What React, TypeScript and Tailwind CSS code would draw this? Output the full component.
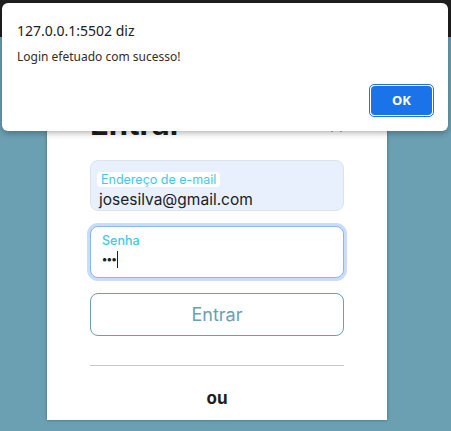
import React from "react";

export default function App() {
  return (
    <div className="relative h-[431px] w-[451px] overflow-hidden bg-[#6b9fb2]">
      <div className="h-[37px] bg-[#1f1f1f]" />
      <div
        className="ml-[47px] mt-[23px] h-[360px] w-[340px] bg-white px-[43px] pt-[44px] shadow-[0_0_3px_rgba(0,0,0,0.35)]"
        style={{ fontFamily: "Inter, 'Open Sans', sans-serif" }}
      >
        <div className="flex h-[40px] items-center justify-between">
          <span className="text-[31px] font-bold leading-[40px] text-[#1d1d1f]">Entrar</span>
          <span className="mr-[-1px] text-[26px] leading-none text-[#666]">×</span>
        </div>
        <div className="mt-[16px] h-[51px] rounded-[8px] border border-[#dde3ec] bg-[#e8f0fe] pl-[6px] pt-[5px]">
          <div className="inline-block h-[15px] rounded-[4px] bg-white px-[4px] text-[12.5px] leading-[15px] text-[#3fc8ec]">
            Endereço de e-mail
          </div>
          <div className="pl-[2px] text-[15.5px] leading-[19px] text-[#202124]">josesilva@gmail.com</div>
        </div>
        <div className="mt-[15px] h-[52px] rounded-[8px] border border-[#8ab4f8] bg-white pl-[7px] pt-[6px] shadow-[0_0_0_3px_#c9dcfc]">
          <div className="px-[4px] text-[12.5px] font-medium leading-[15px] text-[#3fc8ec]">Senha</div>
          <div className="flex items-center pl-[4px] pt-[2px]">
            <span className="text-[11px] font-bold leading-[18px] tracking-[-0.5px] text-[#202124]">•••</span>
            <span className="ml-[1px] h-[17px] w-px bg-[#202124]" />
          </div>
        </div>
        <div className="mt-[15px] flex h-[43px] items-center justify-center rounded-[8px] border border-[#6b9fb2] text-[18px] text-[#6b9fb2]">
          Entrar
        </div>
        <div className="mt-[29px] h-px bg-[#c8c8c8]" />
        <div className="mt-[20px] text-center text-[17px] font-bold leading-[24px] text-[#1d1d1f]">ou</div>
      </div>

      <div
        className="absolute left-[2px] top-[3px] h-[128px] w-[446px] rounded-[6px] bg-white shadow-[0_2px_6px_rgba(0,0,0,0.3)]"
        style={{ fontFamily: "'Noto Sans', 'Liberation Sans', sans-serif" }}
      >
        <div className="pl-[15px] pt-[18px] text-[14px] leading-[20px] text-[#202124]">127.0.0.1:5502 diz</div>
        <div className="pl-[15px] pt-[8px] text-[12px] leading-[16px] text-[#3a2a24]">Login efetuado com sucesso!</div>
        <div className="absolute left-[367px] top-[81px] rounded-[5px] border border-[#1a73e8] bg-white p-px">
          <div className="flex h-[29px] w-[61px] items-center justify-center rounded-[4px] bg-[#1a73e8] text-[13px] font-bold text-white">
            OK
          </div>
        </div>
      </div>
    </div>
  );
}
